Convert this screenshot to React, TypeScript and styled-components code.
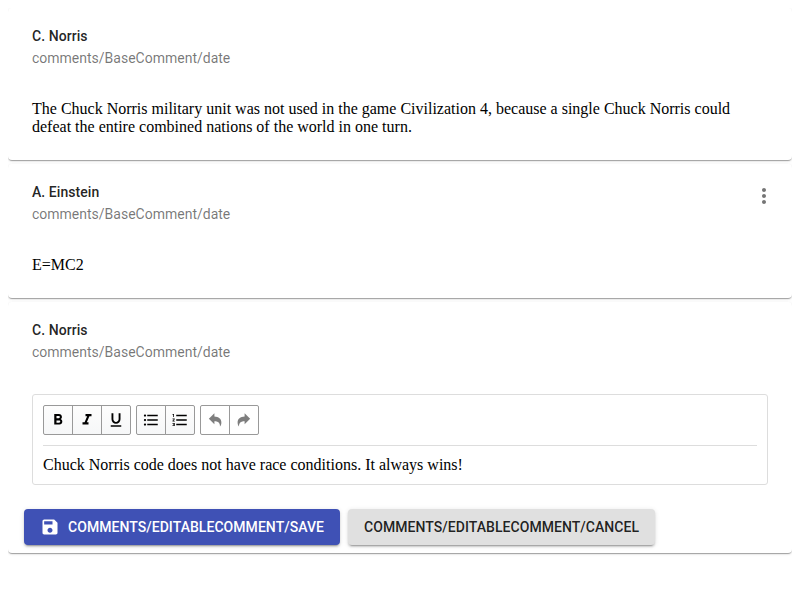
import React from "react";
import styled, { createGlobalStyle } from "styled-components";

const GlobalStyle = createGlobalStyle`
  body {
    margin: 8px;
    background: #fff;
    color: #000;
    font: 16px "Liberation Serif", serif;
  }
`;

const CommentList = styled.main`
  display: flex;
  flex-direction: column;
  gap: 4px;
  padding-bottom: 16px;
`;

const Card = styled.article`
  border-radius: 4px;
  background: #fff;
  box-shadow: 0px 2px 1px -1px rgba(0, 0, 0, 0.2), 0px 1px 1px 0px rgba(0, 0, 0, 0.14),
    0px 1px 3px 0px rgba(0, 0, 0, 0.12);
`;

const Header = styled.header`
  display: flex;
  justify-content: space-between;
  box-sizing: border-box;
  height: 92px;
  padding: 17px 16px 0 24px;
  font: 14px/22px Roboto, sans-serif;
`;

const Author = styled.div`
  color: rgba(0, 0, 0, 0.87);
  font-weight: 500;
  letter-spacing: 0.06px;
`;

const CommentDate = styled.div`
  color: rgba(0, 0, 0, 0.54);
`;

const MenuButton = styled.button`
  width: 24px;
  height: 24px;
  margin-top: 3px;
  padding: 0;
  border: 0;
  background: none;
  color: rgba(0, 0, 0, 0.54);
`;

const Body = styled.div`
  padding: 0 24px 24px;
  line-height: 18px;
`;

const Editor = styled.div`
  border: 1px solid #ddd;
  border-radius: 3px;
`;

const Toolbar = styled.div`
  display: flex;
  gap: 5px;
  margin: 0 10px;
  padding: 10px 0;
  border-bottom: 1px solid #ddd;
`;

const ToolGroup = styled.div`
  display: flex;
`;

const ToolButton = styled.button`
  display: flex;
  align-items: center;
  justify-content: center;
  box-sizing: border-box;
  width: 30px;
  height: 30px;
  padding: 0;
  border: 1px solid #999;
  background: linear-gradient(to bottom, #fdfdfd 0%, #f6f7f8 100%);
  color: #000;

  & + & {
    margin-left: -1px;
  }
  &:first-child {
    border-top-left-radius: 2px;
    border-bottom-left-radius: 2px;
  }
  &:last-child {
    border-top-right-radius: 2px;
    border-bottom-right-radius: 2px;
  }
  &:disabled {
    background: none;
  }
  &:disabled svg {
    opacity: 0.5;
  }
`;

const EditorText = styled.div`
  padding: 10px;
`;

const Actions = styled.footer`
  display: flex;
  gap: 8px;
  padding: 0 16px 8px;
`;

const ActionButton = styled.button<{ $primary?: boolean }>`
  display: inline-flex;
  align-items: center;
  gap: 8px;
  height: 36px;
  padding: 0 16px;
  border: 0;
  border-radius: 4px;
  background: ${(p) => (p.$primary ? "#3f51b5" : "#e0e0e0")};
  color: ${(p) => (p.$primary ? "#fff" : "rgba(0, 0, 0, 0.87)")};
  font: 500 14px/24px Roboto, sans-serif;
  letter-spacing: 0.05px;
  text-transform: uppercase;
  white-space: nowrap;
  box-shadow: 0 3px 1px -2px rgba(0, 0, 0, 0.2), 0 2px 2px 0 rgba(0, 0, 0, 0.14),
    0 1px 5px 0 rgba(0, 0, 0, 0.12);
`;

const icons = {
  more: "M12 8c1.1 0 2-.9 2-2s-.9-2-2-2-2 .9-2 2 .9 2 2 2zm0 2c-1.1 0-2 .9-2 2s.9 2 2 2 2-.9 2-2-.9-2-2-2zm0 6c-1.1 0-2 .9-2 2s.9 2 2 2 2-.9 2-2-.9-2-2-2z",
  save: "M17 3H5c-1.11 0-2 .9-2 2v14c0 1.1.89 2 2 2h14c1.1 0 2-.9 2-2V7l-4-4zm-5 16c-1.66 0-3-1.34-3-3s1.34-3 3-3 3 1.34 3 3-1.34 3-3 3zm3-10H5V5h10v4z",
  bold: "M15.6 10.79c.97-.67 1.65-1.77 1.65-2.79 0-2.26-1.75-4-4-4H7v14h7.04c2.09 0 3.71-1.7 3.71-3.79 0-1.52-.86-2.82-2.15-3.42zM10 6.5h3c.83 0 1.5.67 1.5 1.5s-.67 1.5-1.5 1.5h-3v-3zm3.5 9H10v-3h3.5c.83 0 1.5.67 1.5 1.5s-.67 1.5-1.5 1.5z",
  italic: "M10 4v3h2.21l-3.42 8H6v3h8v-3h-2.21l3.42-8H18V4z",
  underline: "M12 17c3.31 0 6-2.69 6-6V3h-2.5v8c0 1.93-1.57 3.5-3.5 3.5S8.5 12.93 8.5 11V3H6v8c0 3.31 2.69 6 6 6zm-7 2v2h14v-2H5z",
  bullets: "M4 10.5c-.83 0-1.5.67-1.5 1.5s.67 1.5 1.5 1.5 1.5-.67 1.5-1.5-.67-1.5-1.5-1.5zm0-6c-.83 0-1.5.67-1.5 1.5S3.17 7.5 4 7.5 5.5 6.83 5.5 6 4.83 4.5 4 4.5zm0 12c-.83 0-1.5.68-1.5 1.5s.68 1.5 1.5 1.5 1.5-.68 1.5-1.5-.67-1.5-1.5-1.5zM7 19h14v-2H7v2zm0-6h14v-2H7v2zm0-8v2h14V5H7z",
  numbers: "M2 17h2v.5H3v1h1v.5H2v1h3v-4H2v1zm1-9h1V4H2v1h1v3zm-1 3h1.8L2 13.1v.9h3v-1H3.2L5 10.9V10H2v1zm5-6v2h14V5H7zm0 14h14v-2H7v2zm0-6h14v-2H7v2z",
  undo: "M11.2 3v4.3c5.6.1 9.4 3.1 9.3 8.3 0 2-.6 3.7-1.9 5.2.4-4.5-2-7.3-7.4-7.2v4L3.8 10.2z",
  redo: "M12.8 3v4.3c-5.6.1-9.4 3.1-9.3 8.3 0 2 .6 3.7 1.9 5.2-.4-4.5 2-7.3 7.4-7.2v4l7.4-7.4z",
};

type IconName = keyof typeof icons;

function Icon({ name, size }: { name: IconName; size: number }) {
  return (
    <svg width={size} height={size} viewBox="0 0 24 24" fill="currentColor" aria-hidden="true">
      <path d={icons[name]} />
    </svg>
  );
}

const tools: { names: IconName[]; disabled?: boolean }[] = [
  { names: ["bold", "italic", "underline"] },
  { names: ["bullets", "numbers"] },
  { names: ["undo", "redo"], disabled: true },
];

function CommentHeader({ author, menu }: { author: string; menu?: boolean }) {
  return (
    <Header>
      <div>
        <Author>{author}</Author>
        <CommentDate>comments/BaseComment/date</CommentDate>
      </div>
      {menu && (
        <MenuButton aria-label="More">
          <Icon name="more" size={24} />
        </MenuButton>
      )}
    </Header>
  );
}

export default function App() {
  return (
    <>
      <GlobalStyle />
      <CommentList>
        <Card>
          <CommentHeader author="C. Norris" />
          <Body>
            The Chuck Norris military unit was not used in the game Civilization 4, because a single
            Chuck Norris could defeat the entire combined nations of the world in one turn.
          </Body>
        </Card>
        <Card>
          <CommentHeader author="A. Einstein" menu />
          <Body>E=MC2</Body>
        </Card>
        <Card>
          <CommentHeader author="C. Norris" />
          <Body>
            <Editor>
              <Toolbar>
                {tools.map(({ names, disabled }) => (
                  <ToolGroup key={names[0]}>
                    {names.map((name) => (
                      <ToolButton key={name} disabled={disabled} aria-label={name}>
                        <Icon name={name} size={18} />
                      </ToolButton>
                    ))}
                  </ToolGroup>
                ))}
              </Toolbar>
              <EditorText>Chuck Norris code does not have race conditions. It always wins!</EditorText>
            </Editor>
          </Body>
          <Actions>
            <ActionButton $primary>
              <Icon name="save" size={20} />
              comments/EditableComment/save
            </ActionButton>
            <ActionButton>comments/EditableComment/cancel</ActionButton>
          </Actions>
        </Card>
      </CommentList>
    </>
  );
}
